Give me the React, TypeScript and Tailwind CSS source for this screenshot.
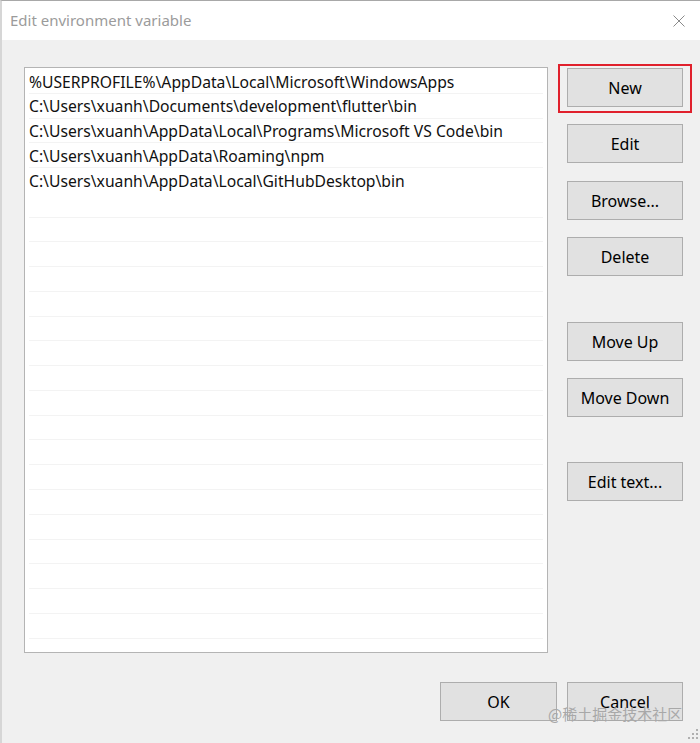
import React from "react";

const rows = [
  "%USERPROFILE%\\AppData\\Local\\Microsoft\\WindowsApps",
  "C:\\Users\\xuanh\\Documents\\development\\flutter\\bin",
  "C:\\Users\\xuanh\\AppData\\Local\\Programs\\Microsoft VS Code\\bin",
  "C:\\Users\\xuanh\\AppData\\Roaming\\npm",
  "C:\\Users\\xuanh\\AppData\\Local\\GitHubDesktop\\bin",
];

function Btn({ label, className = "" }: { label: string; className?: string }) {
  return (
    <div
      className={
        "w-[116px] h-[39px] bg-[#e1e1e1] border border-[#adadad] flex items-center justify-center text-[16px] text-black " +
        className
      }
    >
      {label}
    </div>
  );
}

export default function App() {
  const all = Array.from({ length: 24 }, (_, i) => rows[i] ?? "");
  return (
    <div
      className="relative w-[700px] h-[743px] overflow-hidden bg-[#f0f0f0] border-t border-[#a8a8a8] border-l-2 border-l-[#d6d6d6]"
      style={{ fontFamily: '"Noto Sans", "Open Sans", sans-serif' }}
    >
      {/* title bar */}
      <div className="h-[39px] bg-white flex items-center pl-[8px] pr-[14px] justify-between">
        <span className="text-[15px] text-[#9b9b9b]">Edit environment variable</span>
        <svg width="12" height="12" viewBox="0 0 12 12" className="mr-[1px]">
          <path d="M0.5 0.5 L11.5 11.5 M11.5 0.5 L0.5 11.5" stroke="#8a8a8a" strokeWidth="1" />
        </svg>
      </div>

      {/* body */}
      <div className="flex pt-[27px] pl-[22px]">
        <div className="w-[524px] h-[586px] bg-white border border-[#b4b4b4] overflow-hidden pt-[1px]">
          {all.map((t, i) => (
            <div key={i} className="h-[24.77px] px-[4px]">
              <div
                className={
                  "h-full flex items-center pt-[3px] text-[15.7px] text-[#111] leading-none whitespace-nowrap " +
                  (i === 4 ? "" : "border-b border-[#f3f3f3]")
                }
              >
                {t}
              </div>
            </div>
          ))}
        </div>

        <div className="ml-[19px] pt-[1px] flex flex-col">
          <Btn label="New" />
          <Btn label="Edit" className="mt-[17px]" />
          <Btn label="Browse..." className="mt-[18px]" />
          <Btn label="Delete" className="mt-[17px]" />
          <Btn label="Move Up" className="mt-[46px]" />
          <Btn label="Move Down" className="mt-[17px]" />
          <Btn label="Edit text..." className="mt-[45px]" />
        </div>
      </div>

      {/* bottom buttons */}
      <div className="flex pl-[438px] mt-[29px] gap-[10px]">
        <Btn label="OK" className="w-[117px]" />
        <Btn label="Cancel" />
      </div>

      {/* red highlight around New */}
      <div className="absolute left-[556px] top-[63px] w-[134px] h-[49px] border-2 border-[#e0202c]" />

      {/* watermark */}
      <div
        className="absolute left-[546px] top-[702px] text-[15px] text-[#a8a8a8] whitespace-nowrap"
        style={{ fontFamily: '"Noto Sans CJK SC", "Noto Sans", sans-serif' }}
      >
        @稀土掘金技术社区
      </div>

      {/* size grip */}
      <svg className="absolute left-[686px] top-[728px]" width="12" height="12" viewBox="0 0 12 12">
        <rect x="8" y="0" width="2" height="2" fill="#b0b0b0" />
        <rect x="4" y="4" width="2" height="2" fill="#b0b0b0" />
        <rect x="8" y="4" width="2" height="2" fill="#b0b0b0" />
        <rect x="0" y="8" width="2" height="2" fill="#b0b0b0" />
        <rect x="4" y="8" width="2" height="2" fill="#b0b0b0" />
        <rect x="8" y="8" width="2" height="2" fill="#b0b0b0" />
      </svg>
    </div>
  );
}
